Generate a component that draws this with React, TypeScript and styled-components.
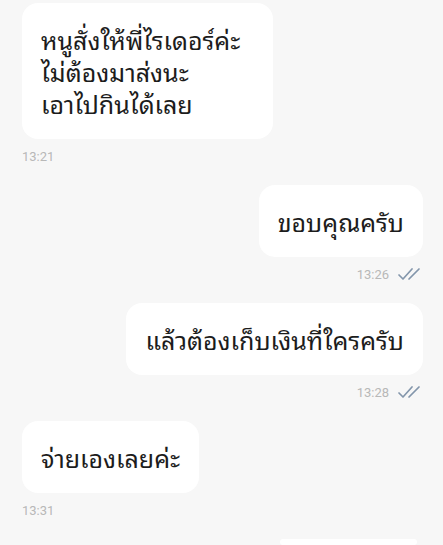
import React from 'react';
import styled, { createGlobalStyle } from 'styled-components';

const GlobalStyle = createGlobalStyle`
  html, body {
    margin: 0;
    padding: 0;
    background: #f7f7f7;
  }
  body {
    font-family: "Noto Sans Thai Looped", "Noto Sans Thai", "Noto Sans", sans-serif;
  }
`;

interface SideProps {
  mine?: boolean;
}

const ChatScreen = styled.div`
  width: 443px;
  height: 545px;
  overflow: hidden;
  background: #f7f7f7;
  padding: 3px 20px 0 22px;
  box-sizing: border-box;
  display: flex;
  flex-direction: column;
`;

const MessageGroup = styled.div<SideProps>`
  display: flex;
  flex-direction: column;
  align-items: ${(props) => (props.mine ? 'flex-end' : 'flex-start')};
  margin-bottom: 22px;
`;

const Bubble = styled.div<{ wide?: boolean }>`
  background: #ffffff;
  border-radius: 16px;
  padding: 20px ${(props) => (props.wide ? '33px' : '19px')} 20px 19px;
  font-size: 25px;
  line-height: 32px;
  color: #1c1c1c;
  white-space: pre-line;
`;

const Meta = styled.div`
  display: flex;
  align-items: center;
  gap: 8px;
  height: 14px;
  margin-top: 10px;
  font-family: "Roboto", "Liberation Sans", sans-serif;
  font-size: 13px;
  color: #b8b8b8;
`;

const Ticks = () => (
  <svg width="26" height="14" viewBox="0 0 26 14" fill="none">
    <path d="M2 8 L6 12 L15 2" stroke="#8396ab" strokeWidth="1.7" strokeLinecap="round" strokeLinejoin="round" />
    <path d="M12 12 L22 2" stroke="#8396ab" strokeWidth="1.7" strokeLinecap="round" />
  </svg>
);

interface Message {
  text: string;
  time: string;
  mine?: boolean;
  wide?: boolean;
}

const messages: Message[] = [
  { text: 'หนูสั่งให้พี่ไรเดอร์ค่ะ\nไม่ต้องมาส่งนะ\nเอาไปกินได้เลย', time: '13:21', wide: true },
  { text: 'ขอบคุณครับ', time: '13:26', mine: true },
  { text: 'แล้วต้องเก็บเงินที่ใครครับ', time: '13:28', mine: true },
  { text: 'จ่ายเองเลยค่ะ', time: '13:31' },
];

const PeekBubble = styled.div`
  align-self: flex-end;
  width: 137px;
  height: 40px;
  margin-right: 6px;
  background: #ffffff;
  border-radius: 16px;
`;

const App: React.FC = () => (
  <React.Fragment>
    <GlobalStyle />
    <ChatScreen>
      {messages.map((m) => (
        <MessageGroup key={m.time} mine={m.mine}>
          <Bubble wide={m.wide}>{m.text}</Bubble>
          <Meta>
            {m.time}
            {m.mine && <Ticks />}
          </Meta>
        </MessageGroup>
      ))}
      <PeekBubble />
    </ChatScreen>
  </React.Fragment>
);

export default App;
